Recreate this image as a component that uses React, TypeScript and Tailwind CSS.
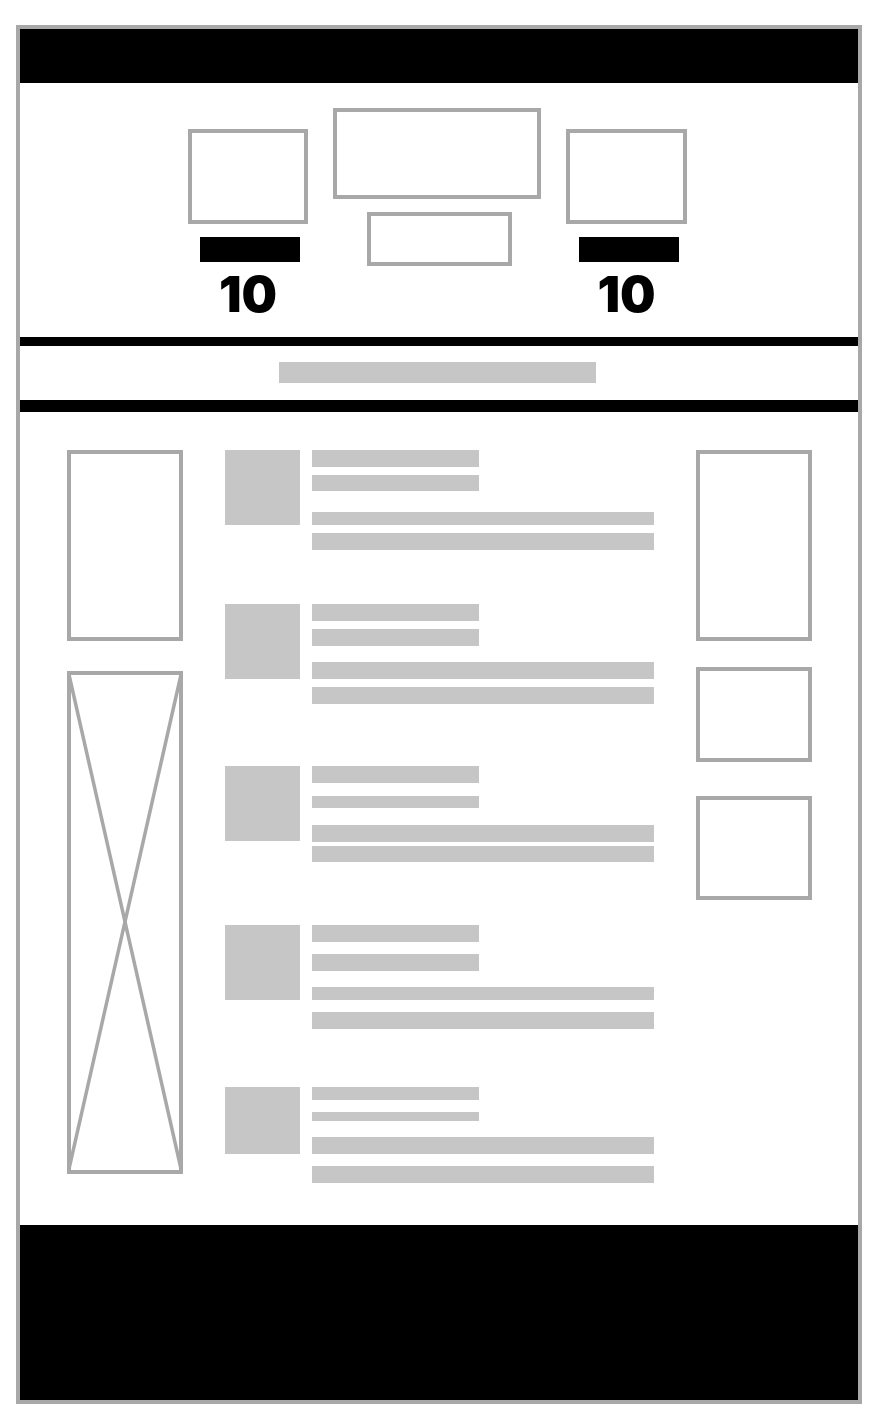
const items = [
  {
    gap: 'mt-0',
    square: 'h-[75px]',
    lines: ['mt-0 h-[17px] w-[167px]', 'mt-[8px] h-[16px] w-[167px]', 'mt-[21px] h-[13px] w-[342px]', 'mt-[8px] h-[17px] w-[342px]'],
  },
  {
    gap: 'mt-[54px]',
    square: 'h-[75px]',
    lines: ['mt-0 h-[17px] w-[167px]', 'mt-[8px] h-[17px] w-[167px]', 'mt-[16px] h-[17px] w-[342px]', 'mt-[8px] h-[17px] w-[342px]'],
  },
  {
    gap: 'mt-[62px]',
    square: 'h-[75px]',
    lines: ['mt-0 h-[17px] w-[167px]', 'mt-[13px] h-[12px] w-[167px]', 'mt-[17px] h-[17px] w-[342px]', 'mt-[4px] h-[16px] w-[342px]'],
  },
  {
    gap: 'mt-[63px]',
    square: 'h-[75px]',
    lines: ['mt-0 h-[17px] w-[167px]', 'mt-[12px] h-[17px] w-[167px]', 'mt-[16px] h-[13px] w-[342px]', 'mt-[12px] h-[17px] w-[342px]'],
  },
  {
    gap: 'mt-[58px]',
    square: 'h-[67px]',
    lines: ['mt-0 h-[13px] w-[167px]', 'mt-[12px] h-[9px] w-[167px]', 'mt-[16px] h-[17px] w-[342px]', 'mt-[12px] h-[17px] w-[342px]'],
  },
];

function Score() {
  return (
    <div
      className="mt-[7px] text-center text-[50px] leading-none font-black text-black"
      style={{ fontFamily: 'Inter, "Liberation Sans", sans-serif' }}
    >
      10
    </div>
  );
}

export default function App() {
  return (
    <div className="min-h-screen bg-white pt-[25px] pl-[16px]">
      <div className="w-[846px] border-4 border-[#a8a8a8] bg-white">
        {/* top bar */}
        <div className="h-[54px] bg-black" />

        {/* hero */}
        <div className="flex h-[254px] items-start pl-[168px]">
          <div className="w-[120px]">
            <div className="mt-[46px] h-[95px] border-4 border-[#a8a8a8]" />
            <div className="mt-[13px] ml-[12px] h-[25px] w-[100px] bg-black" />
            <Score />
          </div>
          <div className="ml-[25px] w-[208px]">
            <div className="mt-[25px] h-[91px] border-4 border-[#a8a8a8]" />
            <div className="mt-[13px] ml-[34px] h-[54px] w-[145px] border-4 border-[#a8a8a8]" />
          </div>
          <div className="ml-[25px] w-[121px]">
            <div className="mt-[46px] h-[95px] border-4 border-[#a8a8a8]" />
            <div className="mt-[13px] ml-[13px] h-[25px] w-[100px] bg-black" />
            <Score />
          </div>
        </div>

        {/* nav strip */}
        <div className="h-[9px] bg-black" />
        <div className="h-[54px] pt-[16px]">
          <div className="ml-[259px] h-[21px] w-[317px] bg-[#c6c6c6]" />
        </div>
        <div className="h-[12px] bg-black" />

        {/* content */}
        <div className="flex h-[813px] items-start pt-[38px] pl-[47px]">
          <div className="w-[116px]">
            <div className="h-[191px] border-4 border-[#a8a8a8]" />
            {/* image placeholder */}
            <div className="relative mt-[30px] h-[503px] border-4 border-[#a8a8a8]">
              <svg className="absolute -inset-1 h-[503px] w-[116px]" viewBox="0 0 116 503" preserveAspectRatio="none">
                <line x1="1.5" y1="1.5" x2="114.5" y2="500" stroke="#a8a8a8" strokeWidth="3.5" />
                <line x1="114.5" y1="1.5" x2="1.5" y2="500" stroke="#a8a8a8" strokeWidth="3.5" />
              </svg>
            </div>
          </div>

          <div className="ml-[42px] w-[429px]">
            {items.map((item, i) => (
              <div key={i} className={`flex items-start ${item.gap}`}>
                <div className={`w-[75px] bg-[#c6c6c6] ${item.square}`} />
                <div className="ml-[12px]">
                  {item.lines.map((l, j) => (
                    <div key={j} className={`bg-[#c6c6c6] ${l}`} />
                  ))}
                </div>
              </div>
            ))}
          </div>

          <div className="ml-[42px] w-[116px]">
            <div className="h-[191px] border-4 border-[#a8a8a8]" />
            <div className="mt-[26px] h-[95px] border-4 border-[#a8a8a8]" />
            <div className="mt-[34px] h-[104px] border-4 border-[#a8a8a8]" />
          </div>
        </div>

        {/* footer */}
        <div className="h-[175px] bg-black" />
      </div>
    </div>
  );
}
